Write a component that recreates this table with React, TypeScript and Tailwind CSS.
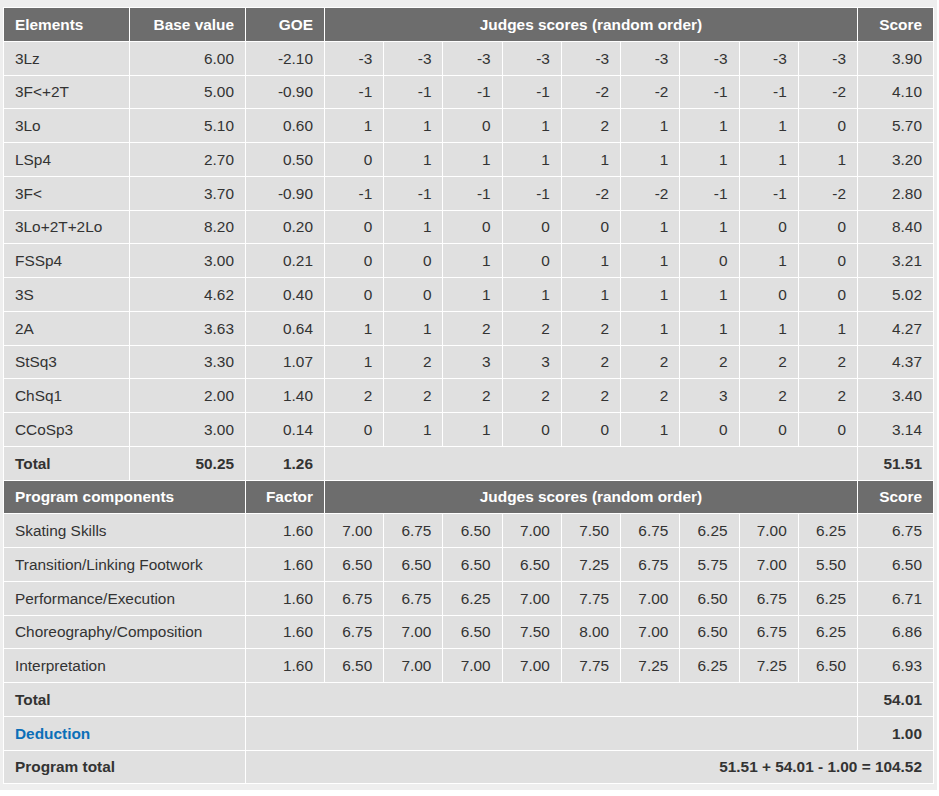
const elements: [string, string, string, string[], string][] = [
  ["3Lz", "6.00", "-2.10", ["-3", "-3", "-3", "-3", "-3", "-3", "-3", "-3", "-3"], "3.90"],
  ["3F<+2T", "5.00", "-0.90", ["-1", "-1", "-1", "-1", "-2", "-2", "-1", "-1", "-2"], "4.10"],
  ["3Lo", "5.10", "0.60", ["1", "1", "0", "1", "2", "1", "1", "1", "0"], "5.70"],
  ["LSp4", "2.70", "0.50", ["0", "1", "1", "1", "1", "1", "1", "1", "1"], "3.20"],
  ["3F<", "3.70", "-0.90", ["-1", "-1", "-1", "-1", "-2", "-2", "-1", "-1", "-2"], "2.80"],
  ["3Lo+2T+2Lo", "8.20", "0.20", ["0", "1", "0", "0", "0", "1", "1", "0", "0"], "8.40"],
  ["FSSp4", "3.00", "0.21", ["0", "0", "1", "0", "1", "1", "0", "1", "0"], "3.21"],
  ["3S", "4.62", "0.40", ["0", "0", "1", "1", "1", "1", "1", "0", "0"], "5.02"],
  ["2A", "3.63", "0.64", ["1", "1", "2", "2", "2", "1", "1", "1", "1"], "4.27"],
  ["StSq3", "3.30", "1.07", ["1", "2", "3", "3", "2", "2", "2", "2", "2"], "4.37"],
  ["ChSq1", "2.00", "1.40", ["2", "2", "2", "2", "2", "2", "3", "2", "2"], "3.40"],
  ["CCoSp3", "3.00", "0.14", ["0", "1", "1", "0", "0", "1", "0", "0", "0"], "3.14"],
];

const components: [string, string, string[], string][] = [
  ["Skating Skills", "1.60", ["7.00", "6.75", "6.50", "7.00", "7.50", "6.75", "6.25", "7.00", "6.25"], "6.75"],
  ["Transition/Linking Footwork", "1.60", ["6.50", "6.50", "6.50", "6.50", "7.25", "6.75", "5.75", "7.00", "5.50"], "6.50"],
  ["Performance/Execution", "1.60", ["6.75", "6.75", "6.25", "7.00", "7.75", "7.00", "6.50", "6.75", "6.25"], "6.71"],
  ["Choreography/Composition", "1.60", ["6.75", "7.00", "6.50", "7.50", "8.00", "7.00", "6.50", "6.75", "6.25"], "6.86"],
  ["Interpretation", "1.60", ["6.50", "7.00", "7.00", "7.00", "7.75", "7.25", "6.25", "7.25", "6.50"], "6.93"],
];

const th = "bg-[#6d6d6d] text-white font-bold h-[32.75px] px-[11px] pt-px pb-0";
const td = "bg-[#e0e0e0] h-[32.75px] px-[11px] pt-px pb-0";

function App() {
  return (
    <div className="w-[937px] bg-[#eeeeee] pt-[7px] pb-[6px] px-[3px] font-['Liberation_Sans',Arial,sans-serif] text-[15.4px] leading-[18px] text-[#333]">
      <table className="w-[931px] table-fixed border-separate border-spacing-[1px] bg-white">
        <colgroup>
          <col className="w-[125px]" />
          <col className="w-[115px]" />
          <col className="w-[78px]" />
          {Array.from({ length: 9 }).map((_, i) => (
            <col key={i} />
          ))}
          <col className="w-[75px]" />
        </colgroup>
        <tbody>
          <tr>
            <td className={`${th} text-left`}>Elements</td>
            <td className={`${th} text-right`}>Base value</td>
            <td className={`${th} text-right`}>GOE</td>
            <td className={`${th} text-center`} colSpan={9}>Judges scores (random order)</td>
            <td className={`${th} text-right`}>Score</td>
          </tr>
          {elements.map(([name, base, goe, scores, score]) => (
            <tr key={name}>
              <td className={`${td} text-left`}>{name}</td>
              <td className={`${td} text-right`}>{base}</td>
              <td className={`${td} text-right`}>{goe}</td>
              {scores.map((s, i) => (
                <td key={i} className={`${td} text-right`}>{s}</td>
              ))}
              <td className={`${td} text-right`}>{score}</td>
            </tr>
          ))}
          <tr>
            <td className={`${td} text-left font-bold`}>Total</td>
            <td className={`${td} text-right font-bold`}>50.25</td>
            <td className={`${td} text-right font-bold`}>1.26</td>
            <td className={td} colSpan={9}></td>
            <td className={`${td} text-right font-bold`}>51.51</td>
          </tr>
          <tr>
            <td className={`${th} text-left`} colSpan={2}>Program components</td>
            <td className={`${th} text-right`}>Factor</td>
            <td className={`${th} text-center`} colSpan={9}>Judges scores (random order)</td>
            <td className={`${th} text-right`}>Score</td>
          </tr>
          {components.map(([name, factor, scores, score]) => (
            <tr key={name}>
              <td className={`${td} text-left`} colSpan={2}>{name}</td>
              <td className={`${td} text-right`}>{factor}</td>
              {scores.map((s, i) => (
                <td key={i} className={`${td} text-right`}>{s}</td>
              ))}
              <td className={`${td} text-right`}>{score}</td>
            </tr>
          ))}
          <tr>
            <td className={`${td} text-left font-bold`} colSpan={2}>Total</td>
            <td className={td} colSpan={10}></td>
            <td className={`${td} text-right font-bold`}>54.01</td>
          </tr>
          <tr>
            <td className={`${td} text-left font-bold text-[#0b6fb8]`} colSpan={2}>Deduction</td>
            <td className={td} colSpan={10}></td>
            <td className={`${td} text-right font-bold`}>1.00</td>
          </tr>
          <tr>
            <td className={`${td} text-left font-bold`} colSpan={2}>Program total</td>
            <td className={`${td} text-right font-bold`} colSpan={11}>51.51 + 54.01 - 1.00 = 104.52</td>
          </tr>
        </tbody>
      </table>
    </div>
  );
}

export default App;
